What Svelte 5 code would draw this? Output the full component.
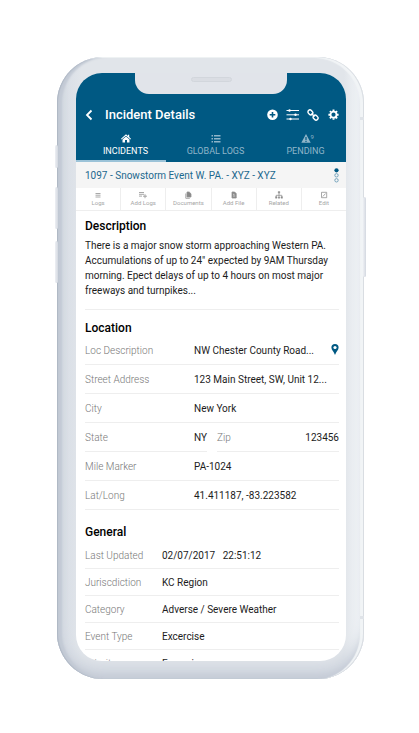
<script>
  const tools = ['Logs', 'Add Logs', 'Documents', 'Add File', 'Related', 'Edit'];

  const general = [
    ['Last Updated', '02/07/2017\u00a0\u00a0 22:51:12'],
    ['Juriscdiction', 'KC Region'],
    ['Category', 'Adverse / Severe Weather'],
    ['Event Type', 'Excercise'],
    ['Priority', 'Excercise']
  ];

  let activeTab = $state('INCIDENTS');
  const tabs = ['INCIDENTS', 'GLOBAL LOGS', 'PENDING'];
</script>

<main>
  <div class="phone">
    <i class="key mute"></i>
    <i class="key up"></i>
    <i class="key down"></i>
    <i class="key power"></i>
    <i class="antenna high"></i>
    <i class="antenna low"></i>

    <div class="screen">
      <div class="notch"><span class="speaker"></span></div>

      <header>
        <div class="bar">
          <button class="icon back" aria-label="Back">
            <svg width="8" height="12" viewBox="0 0 8 12"><path d="M6.500 1.500 2 6l4.500 4.500" fill="none" stroke="#fff" stroke-width="1.800" /></svg>
          </button>
          <h1>Incident Details</h1>
          <div class="actions">
            <button class="icon" aria-label="Add">
              <svg width="12" height="12" viewBox="0 0 12 12"><circle cx="6.500" cy="5.700" r="5.300" fill="#fff" /><path d="M6.500 2.900v5.600M3.700 5.700h5.600" stroke="#005983" stroke-width="1.600" /></svg>
            </button>
            <button class="icon" aria-label="Filters">
              <svg width="13" height="12" viewBox="0 0 13 12"><path d="M.5 1.500h12.500M.5 5.800h12.500M.5 10h12.500" stroke="#fff" stroke-width="1" /><g fill="#fff"><circle cx="3.500" cy="1.500" r="1.200" /><circle cx="9.500" cy="5.800" r="1.200" /><circle cx="4.500" cy="10" r="1.200" /></g></svg>
            </button>
            <button class="icon" aria-label="Link">
              <svg width="12" height="12" viewBox="0 0 12 12"><g fill="none" stroke="#fff" stroke-width="1.400" transform="rotate(45 6 6)"><rect x="-.3" y="4" width="5.200" height="4" rx="2" /><rect x="7.100" y="4" width="5.200" height="4" rx="2" /><path d="M3.800 6h4.400" /></g></svg>
            </button>
            <button class="icon" aria-label="Settings">
              <svg width="12" height="12" viewBox="0 0 12 12"><circle cx="6.500" cy="5.700" r="3" fill="none" stroke="#fff" stroke-width="1.800" /><g stroke="#fff" stroke-width="1.900"><path d="M6.500.6v1.600M6.500 9.200v1.600M1.400 5.700h1.600M10 5.700h1.600M2.900 2.100l1.100 1.100M9 8.200l1.100 1.100M2.900 9.300l1.100-1.100M9 3.200l1.100-1.100" /></g></svg>
            </button>
          </div>
        </div>

        <nav>
          {#each tabs as tab, i}
            <button class="tab" class:active={activeTab === tab} onclick={() => (activeTab = tab)}>
              {#if i === 0}
                <svg width="10" height="9" viewBox="0 0 10 9" fill="currentColor"><path d="M5 .3 6.900 2V.8h1.300v2.300L10 4.800l-.6.7L5 1.700.6 5.500 0 4.800z" /><path d="M5 2.500 8.500 5.500V8.500H6V6H4v2.500H1.500v-3z" /></svg>
              {:else if i === 1}
                <svg width="10" height="9" viewBox="0 0 10 9" fill="currentColor"><path d="M.5 1h1.500v1.500H.5zM3 1h6.500v1.500H3zM.5 4h1.500v1.500H.5zM3 4h6.500v1.500H3zM.5 7h1.500v1.500H.5zM3 7h6.500v1.500H3z" /></svg>
              {:else}
                <span class="alert">
                  <svg width="10" height="9" viewBox="0 0 10 9"><path d="M5 0l4.700 8.700H.3z" fill="currentColor" /><path d="M5 3v3M5 6.700v1.200" stroke="#005983" stroke-width="1.200" /></svg>
                  <sup>9</sup>
                </span>
              {/if}
              <span>{tab}</span>
            </button>
          {/each}
        </nav>
      </header>

      <div class="event">
        <a href="#event">1097 - Snowstorm Event W. PA. - XYZ - XYZ</a>
        <button class="icon" aria-label="Event pages">
          <svg width="5" height="15" viewBox="0 0 5 15"><circle cx="2.500" cy="2.300" r="2.100" fill="#005983" /><g fill="none" stroke="#5c93b0" stroke-width=".8"><circle cx="2.500" cy="7.300" r="1.700" /><circle cx="2.500" cy="12.300" r="1.700" /></g></svg>
        </button>
      </div>

      <div class="tools">
        {#each tools as tool, i}
          <button>
            <svg width="8" height="8" viewBox="0 0 8 8" fill="none" stroke="#929292" stroke-width=".8">
              {#if i === 0}
                <path d="M1.500 2.500h5M1.500 4.200h5M1.500 6h5" />
              {:else if i === 1}
                <path d="M0 1.500h5M0 3.300h5M0 5.100h3M6 3.200v4M4 5.200h4" />
              {:else if i === 2}
                <path d="M3 1h2.200L7 2.800V6H3z" fill="#888" /><path d="M1.800 2.500v4.800h4" />
              {:else if i === 3}
                <path d="M2 1h2.600L6.200 2.600v4.400H2z" fill="#888" /><path d="M3 3.300h1.500M3 5h2.200" stroke="#fff" stroke-width=".6" />
              {:else if i === 4}
                <path d="M4 2v3M1.200 6V4.300h5.600V6" /><path d="M3.200.5h1.600v1.600H3.200zM.4 5.700h1.600v1.500H.4zM3.200 5.700h1.600v1.500H3.200zM6 5.700h1.600v1.500H6z" fill="#888" stroke-width=".4" />
              {:else}
                <path d="M1.500 1.300h5.200v5.400H1.500zM2.800 5.500l2.800-3" />
              {/if}
            </svg>
            <span>{tool}</span>
          </button>
        {/each}
      </div>

      <div class="content">
        <section class="description">
          <h2>Description</h2>
          <p>There is a major snow storm approaching Western PA. Accumulations of up to 24" expected by 9AM Thursday morning. Epect delays of up to 4 hours on most major freeways and turnpikes...</p>
        </section>

        <section class="location">
          <h2>Location</h2>
          <dl>
            <div class="row">
              <dt>Loc Description</dt>
              <dd>NW Chester County Road...</dd>
              <button class="icon pin" aria-label="Show on map">
                <svg width="8" height="12" viewBox="0 0 8 12"><path d="M4 0a3.600 3.600 0 0 0-3.600 3.600C.4 6.100 2.600 7.500 4 11 5.400 7.500 7.600 6.100 7.600 3.600A3.600 3.600 0 0 0 4 0z" fill="#005983" /><circle cx="4" cy="3.500" r="1.600" fill="#fff" /></svg>
              </button>
            </div>
            <div class="row"><dt>Street Address</dt><dd>123 Main Street, SW, Unit 12...</dd></div>
            <div class="row"><dt>City</dt><dd>New York</dd></div>
            <div class="pair">
              <div class="row"><dt>State</dt><dd>NY</dd></div>
              <div class="row zip"><dt>Zip</dt><dd>123456</dd></div>
            </div>
            <div class="row"><dt>Mile Marker</dt><dd>PA-1024</dd></div>
            <div class="row"><dt>Lat/Long</dt><dd>41.411187, -83.223582</dd></div>
          </dl>
        </section>

        <section class="general">
          <h2>General</h2>
          <dl>
            {#each general as [label, value]}
              <div class="row"><dt>{label}</dt><dd>{value}</dd></div>
            {/each}
          </dl>
        </section>
      </div>
    </div>
  </div>
</main>

<style>
  :global(body) {
    margin: 0;
    background: #fff;
  }

  main {
    box-sizing: border-box;
    height: 100vh;
    padding: 57px 55px 54px 57px;
    font-family: Roboto, 'Liberation Sans', sans-serif;
    font-size: 10px;
    color: #1c1c1c;
  }

  button {
    border: 0;
    padding: 0;
    background: none;
    font: inherit;
    color: inherit;
    cursor: pointer;
  }

  svg {
    display: block;
    flex: none;
  }

  .phone {
    position: relative;
    box-sizing: border-box;
    height: 100%;
    padding: 16px 18px 18px 19px;
    border-radius: 46px;
    background: linear-gradient(90deg, #ced4dd 0, #dbe0e7 12px, #e1e5ea 24px, #e1e5ea calc(100% - 20px), #f1f4f7 calc(100% - 5px), #f6f8fa 100%);
    box-shadow:
      inset -1px 0 0 #d9dde2,
      inset -4px 1px 1px #f1f4f6,
      inset 1px 0 1px #aeb7c4,
      inset 5px 0 2px #c3cad5,
      inset 0 -5px 5px #c6ccd7,
      inset 0 -14px 12px #d0d6df;
  }

  .key {
    position: absolute;
    width: 3px;
    border-radius: 2px;
    background: linear-gradient(90deg, #eef0f4, #d3d8e0);
  }

  .mute {
    left: -2px;
    top: 88px;
    height: 23px;
  }

  .up {
    left: -2px;
    top: 130px;
    height: 42px;
  }

  .down {
    left: -2px;
    top: 184px;
    height: 42px;
  }

  .power {
    right: -2px;
    top: 140px;
    height: 80px;
  }

  .antenna {
    position: absolute;
    right: 0;
    width: 4px;
    height: 3px;
    background: #dfe3e8;
  }

  .high {
    top: 60px;
  }

  .low {
    bottom: 60px;
  }

  .screen {
    position: relative;
    display: flex;
    flex-direction: column;
    height: 100%;
    overflow: hidden;
    border-radius: 26px;
    background: #fff;
  }

  .notch {
    position: absolute;
    top: 0;
    left: 22%;
    right: 22%;
    height: 21px;
    border-radius: 0 0 14px 14px;
    background: #e1e4ea;
  }

  .speaker {
    display: block;
    width: 39px;
    height: 3px;
    margin: 4px auto 0;
    border: 1px solid #d2d6dc;
    border-radius: 3px;
    background: #dadde3;
  }

  header {
    flex: none;
    padding-top: 32px;
    background: #005983;
    color: #fff;
  }

  .bar {
    display: flex;
    align-items: center;
    height: 20px;
    padding: 0 7px 0 9px;
  }

  .icon {
    display: flex;
    align-items: center;
    justify-content: center;
  }

  h1 {
    flex: 1;
    margin: 0 0 0 12px;
    font-size: 13px;
    line-height: 16px;
    font-weight: 500;
  }

  .actions {
    display: flex;
    gap: 8px;
  }

  nav {
    display: flex;
    margin-top: 7px;
  }

  .tab {
    flex: 1;
    display: flex;
    flex-direction: column;
    align-items: center;
    gap: 2px;
    height: 30px;
    padding: 2px 0 0 9px;
    box-sizing: border-box;
    border-bottom: 2px solid #005983;
    font-size: 9px;
    line-height: 13px;
    color: #8fb5c9;
  }

  .tab.active {
    border-color: #9cc3d8;
    color: #fff;
  }

  .alert {
    display: flex;
  }

  sup {
    width: 0;
    font-size: 6px;
    line-height: 5px;
  }

  .event {
    flex: none;
    display: flex;
    align-items: center;
    justify-content: space-between;
    height: 26px;
    padding: 0 7px 0 9px;
    background: #f5f5f5;
  }

  .event a {
    color: #1c688e;
    text-decoration: none;
  }

  .tools {
    flex: none;
    display: flex;
    height: 23px;
    border-bottom: 1px solid #eee;
    box-sizing: border-box;
  }

  .tools button {
    flex: 1;
    display: flex;
    flex-direction: column;
    align-items: center;
    justify-content: center;
    border-right: 1px solid #eee;
    font-size: 6px;
    line-height: 8px;
    color: #a6a6a6;
  }

  .tools button:last-child {
    border-right: 0;
  }

  .content {
    padding: 8px 7px 0 9px;
  }

  h2 {
    margin: 0;
    font-size: 12px;
    line-height: 15px;
    font-weight: 500;
    color: #000;
  }

  p {
    margin: 4px 0 0;
    line-height: 15px;
  }

  .description {
    padding-bottom: 11px;
    border-bottom: 1px solid #eee;
  }

  .location {
    padding-top: 11px;
  }

  dl,
  dd {
    margin: 0;
  }

  .row {
    display: flex;
    align-items: center;
    box-sizing: border-box;
    height: 29px;
    border-bottom: 1px solid #eee;
    white-space: nowrap;
  }

  dt {
    flex: none;
    width: 109px;
    font-weight: 300;
    color: #777;
  }

  .pin {
    margin-left: auto;
  }

  .pair {
    display: flex;
    gap: 10px;
  }

  .zip {
    flex: 1;
    justify-content: space-between;
  }

  .zip dt {
    width: auto;
  }

  .general {
    padding-top: 15px;
  }

  .general dl {
    margin-top: 2px;
  }

  .general .row {
    height: 27px;
  }

  .general dt {
    width: 77px;
  }
</style>
